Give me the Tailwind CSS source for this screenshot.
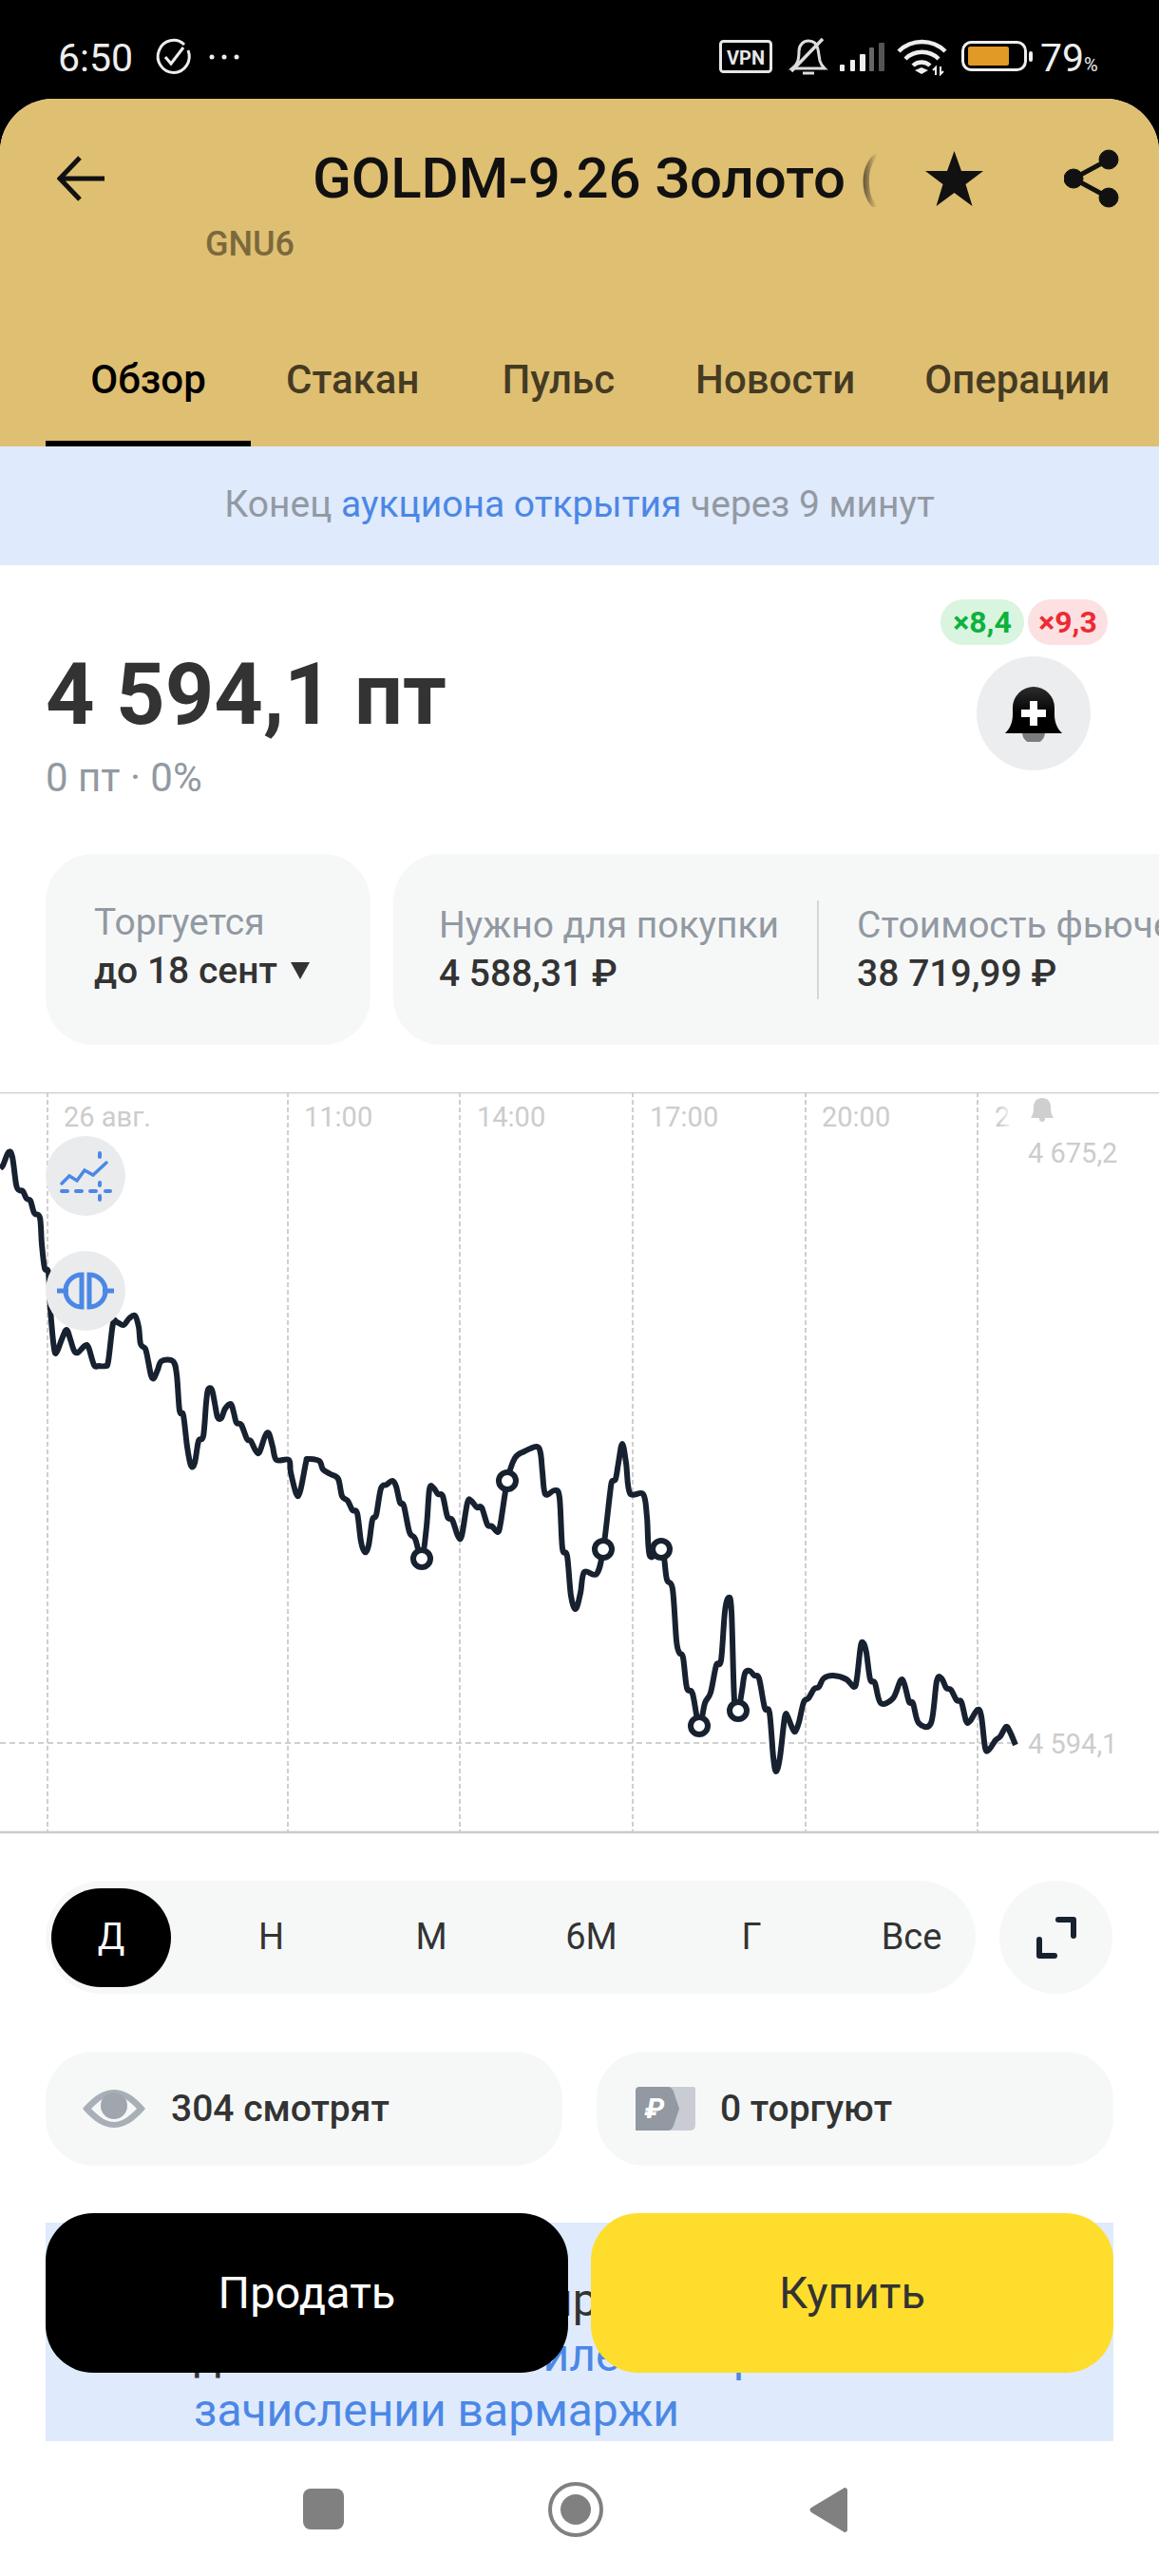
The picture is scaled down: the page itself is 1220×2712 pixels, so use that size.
<!DOCTYPE html>
<html lang="ru">
<head>
    <meta charset="UTF-8">
    <meta name="viewport" content="width=device-width, initial-scale=1.0">
    <script src="https://cdn.jsdelivr.net/npm/@tailwindcss/browser@4"></script>
    <title>GOLDM-9.26</title>
</head>
<body class="relative w-[1220px] h-[2712px] overflow-hidden bg-black font-['Roboto',sans-serif] text-[#333333]">

    <!-- status bar -->
    <div class="relative h-[104px] text-[#eeeeee]">
        <span class="absolute left-[61px] top-[37px] text-[41px] leading-[48px]">6:50</span>
        <svg class="absolute left-0 top-0" width="1220" height="104" viewBox="0 0 1220 104" fill="none">
            <!-- clock check -->
            <path d="M194 47a16.500 17 0 1 0 4 6" stroke="#eee" stroke-width="3"/>
            <path d="M174 60l6 7 13-17" stroke="#eee" stroke-width="3"/>
            <circle cx="223" cy="60" r="2.500" fill="#eee"/><circle cx="236" cy="60" r="2.500" fill="#eee"/><circle cx="249" cy="60" r="2.500" fill="#eee"/>
            <!-- vpn -->
            <rect x="758.500" y="43.500" width="53" height="32" rx="3" stroke="#e6e6e6" stroke-width="3"/>
            <text x="785" y="68" text-anchor="middle" font-size="20" font-weight="700" fill="#e6e6e6" font-family="Roboto">VPN</text>
            <!-- muted bell -->
            <path d="M834 72c5-4 7-8 7-18 0-7 5-11 10-11 5 0 9 3 10 9l2 12c1 4 3 6 5 8z" stroke="#ddd" stroke-width="3"/>
            <path d="M845 77h12" stroke="#ddd" stroke-width="3"/>
            <path d="M833 75l33-34" stroke="#ddd" stroke-width="3.500"/>
            <!-- signal -->
            <rect x="884" y="68" width="5" height="7" rx="1" fill="#eee"/>
            <rect x="895" y="63" width="5" height="12" rx="1" fill="#eee"/>
            <rect x="905" y="57" width="6" height="18" rx="1" fill="#eee"/>
            <rect x="915" y="50" width="5" height="25" rx="1" fill="#666"/>
            <rect x="925" y="45" width="6" height="30" rx="1" fill="#555"/>
            <!-- wifi -->
            <path d="M946 54a35 35 0 0 1 49 0M953 62a25 25 0 0 1 35 0M961 69a13 13 0 0 1 18 0" stroke="#eee" stroke-width="4.500"/>
            <path d="M963 74l7-3 7 3-7 4z" fill="#eee"/>
            <path d="M985 79v-8l-3 3M990 70v8l3-3" stroke="#eee" stroke-width="2"/>
            <!-- battery -->
            <rect x="1013.500" y="44.500" width="66" height="29" rx="9" stroke="#eee" stroke-width="3"/>
            <rect x="1019" y="49" width="43" height="20" rx="2" fill="#e09a25"/>
            <rect x="1083" y="54" width="4" height="11" rx="2" fill="#eee"/>
        </svg>
        <span class="absolute left-[1095px] top-[37px] text-[41px] leading-[48px]">79<span class="text-[20px]">%</span></span>
    </div>

    <div class="relative h-[2608px] bg-white rounded-t-[56px] overflow-hidden">

        <!-- gold instrument header -->
        <header class="h-[366px] bg-[#dfbf72]">
            <div class="flex items-center h-[60px] translate-y-[54px] pl-[60px]">
                <svg width="50" height="48" viewBox="0 0 50 48" fill="none" stroke="#111" stroke-width="5">
                    <path d="M50 24H4M24 2L3 24l21 22"/>
                </svg>
                <div class="ml-[219px] w-[594px] overflow-hidden whitespace-nowrap text-[60px] leading-[60px] font-medium text-[#111] [mask-image:linear-gradient(to_right,black_96%,transparent)]">GOLDM-9.26 Золото (мини)</div>
                <svg class="ml-[51px]" width="61" height="58" viewBox="0 0 61 58" fill="#111"><path d="M30.500 0l7.500 21h23L42.500 35l7 23-19-14-19 14 7-23L0 21h23z"/></svg>
                <svg class="ml-[85px]" width="58" height="62" viewBox="0 0 58 62" fill="#111" stroke="#111">
                    <circle cx="47" cy="11" r="10"/><circle cx="10" cy="31" r="10"/><circle cx="47" cy="51" r="10"/>
                    <path d="M47 11L10 31l37 20" fill="none" stroke-width="5"/>
                </svg>
            </div>
            <div class="ml-[216px] mt-[73px] text-[36px] leading-[40px] font-medium text-[#7b693c]">GNU6</div>
            <nav class="flex h-[193px] pl-[48px] text-[42px] leading-[60px] text-black/70">
                <div class="w-[216px] pt-[93px] text-center font-medium text-black border-b-[6px] border-black">Обзор</div>
                <div class="ml-[37px] pt-[93px] font-medium">Стакан</div>
                <div class="ml-[87px] pt-[93px] font-medium">Пульс</div>
                <div class="ml-[85px] pt-[93px] font-medium">Новости</div>
                <div class="ml-[73px] pt-[93px] font-medium">Операции</div>
            </nav>
        </header>

        <div class="flex items-center justify-center h-[125px] pb-[2px] bg-[#dfeafc] text-[39px] text-[#9299a2]">
            <span>Конец <span class="text-[#4b87e6]">аукциона открытия</span> через 9 минут</span>
        </div>

        <!-- price -->
        <section class="flex justify-between h-[304px] pl-[48px] pr-[54px]">
            <div class="pt-[87px]">
                <div class="text-[90px] leading-[100px] font-bold">4 594,1 пт</div>
                <div class="mt-[12px] text-[42px] leading-[50px] text-[#9299a2]">0 пт · 0%</div>
            </div>
            <div class="flex flex-col items-end pt-[36px]">
                <div class="flex text-[32px] leading-[48px] font-bold">
                    <span class="w-[88px] h-[48px] rounded-full bg-[#d9f5e0] text-center text-[#0cb23c]">×8,4</span>
                    <span class="w-[84px] h-[48px] ml-[4px] rounded-full bg-[#fde0e2] text-center text-[#ec2b33]">×9,3</span>
                </div>
                <div class="mt-[12px] mr-[18px] flex items-center justify-center w-[120px] h-[120px] rounded-full bg-[#ebedef]">
                    <svg width="60" height="60" viewBox="0 0 60 60">
                        <defs><linearGradient id="bellFill" x1="0" y1="0" x2="0" y2="1"><stop offset="0" stop-color="#2d2d2d"/><stop offset="0.6" stop-color="#000"/></linearGradient></defs>
                        <circle cx="30" cy="50" r="12" fill="#7c7c7c"/>
                        <path d="M0 51c5-5 8-11 8-20V24a22 22 0 0 1 44 0v7c0 9 3 15 8 20z" fill="url(#bellFill)"/>
                        <path d="M26 17h8v9h9v8h-9v9h-8v-9h-9v-8h9z" fill="#fff"/>
                    </svg>
                </div>
            </div>
        </section>

        <!-- contract facts -->
        <section class="flex gap-[24px] h-[201px] pl-[48px] text-[39px] leading-[50px] whitespace-nowrap">
            <div class="shrink-0 w-[342px] pt-[47px] pl-[51px] rounded-[50px] bg-[#f6f8f8]">
                <div class="text-[#9299a2]">Торгуется</div>
                <div class="mt-[1px] font-medium flex items-center">до 18 сент<svg class="ml-[14px]" width="20" height="18" viewBox="0 0 20 18" fill="#333"><path d="M0 0h20L10 18z"/></svg></div>
            </div>
            <div class="shrink-0 flex items-center w-[900px] rounded-[50px] bg-[#f6f8f8] pl-[48px]">
                <div>
                    <div class="text-[#9299a2]">Нужно для покупки</div>
                    <div class="mt-[1px] font-medium">4 588,31 ₽</div>
                </div>
                <div class="w-[2px] h-[104px] ml-[40px] bg-[#d4d6d9]"></div>
                <div class="ml-[40px]">
                    <div class="text-[#9299a2]">Стоимость фьючерса</div>
                    <div class="mt-[1px] font-medium">38 719,99 ₽</div>
                </div>
            </div>
        </section>

        <!-- price chart -->
        <svg class="block mt-[50px]" width="1220" height="781" viewBox="0 1150 1220 781" fill="none" font-family="Roboto">
            <path d="M0 1150H1220M0 1929H1220" stroke="#cbcbcb" stroke-width="2.500"/>
            <path d="M50 1150V1929M303 1150V1929M484 1150V1929M666 1150V1929M848 1150V1929M1029 1150V1929" stroke="#cfcfcf" stroke-width="2" stroke-dasharray="5 3"/>
            <path d="M0 1835H1068" stroke="#cfcfcf" stroke-width="2" stroke-dasharray="6 4"/>
            <g font-size="29" fill="#cccccc">
                <text x="67" y="1186">26 авг.</text>
                <text x="320" y="1186">11:00</text>
                <text x="502" y="1186">14:00</text>
                <text x="684" y="1186">17:00</text>
                <text x="865" y="1186">20:00</text>
                <text x="1047" y="1186" fill="url(#labelFade)">2</text>
                <text x="1082" y="1224">4 675,2</text>
                <text x="1082" y="1846">4 594,1</text>
            </g>
            <defs><linearGradient id="labelFade" x1="0" y1="0" x2="1" y2="0"><stop offset="0.3" stop-color="#ccc"/><stop offset="1" stop-color="#ccc" stop-opacity="0.2"/></linearGradient></defs>
            <path d="M1097 1156c-6 0-9 4-9 10 0 5-1 8-3 11h24c-2-3-3-6-3-11 0-6-3-10-9-10z" fill="#cfcfcf"/>
            <circle cx="1097" cy="1178" r="3" fill="#cfcfcf"/>

            <path id="price-line" stroke="#17212f" stroke-width="6" stroke-linejoin="round"></path>

            <!-- trade markers -->
            <g fill="#fff" stroke="#17212f" stroke-width="6">
                <circle cx="444" cy="1641" r="9"/><circle cx="534" cy="1559" r="9"/><circle cx="635" cy="1631" r="9"/>
                <circle cx="696" cy="1631" r="9"/><circle cx="736" cy="1817" r="9"/><circle cx="777" cy="1801" r="9"/>
            </g>

            <!-- chart tools -->
            <circle cx="90" cy="1238" r="42" fill="#e9ebed"/>
            <polyline points="65,1246 73,1238 81,1243 89,1232 98,1237 112,1224" stroke="#4b87e6" stroke-width="3.500" stroke-linecap="round"/>
            <path d="M105 1214v4M105 1245v3M105 1259v4M65 1254h6M80 1254h6M95 1254h6M111 1254h5" stroke="#4b87e6" stroke-width="4" stroke-linecap="round"/>
            <circle cx="90" cy="1359" r="42" fill="#e9ebed"/>
            <path d="M60 1359h12M108 1359h12" stroke="#4b87e6" stroke-width="5"/>
            <path d="M86 1342a17 17 0 0 0 0 34zM94 1342a17 17 0 0 1 0 34z" stroke="#4b87e6" stroke-width="5"/>
        </svg>

        <!-- period selector -->
        <div class="flex gap-[25px] mt-[49px] px-[48px]">
            <div class="flex items-center w-[979px] h-[119px] pl-[6px] gap-[42.500px] rounded-full bg-[#f6f8f8] text-[38px]">
                <span class="flex items-center justify-center w-[126px] h-[104px] rounded-full bg-black text-white">Д</span>
                <span class="w-[126px] text-center">Н</span>
                <span class="w-[126px] text-center">М</span>
                <span class="w-[126px] text-center">6М</span>
                <span class="w-[126px] text-center">Г</span>
                <span class="w-[126px] text-center">Все</span>
            </div>
            <div class="flex items-center justify-center w-[119px] h-[119px] rounded-full bg-[#f6f8f8]">
                <svg width="44" height="46" viewBox="0 0 44 46" fill="none" stroke="#17212f" stroke-width="6" stroke-linecap="round" stroke-linejoin="round">
                    <path d="M24 4h16v17M4 25v17h16"/>
                </svg>
            </div>
        </div>

        <!-- audience -->
        <div class="flex gap-[36px] mt-[61px] px-[48px] text-[39px] font-medium">
            <div class="flex items-center w-[544px] h-[120px] pl-[39px] rounded-[50px] bg-[#f6f8f8]">
                <svg width="66" height="40" viewBox="0 0 66 40">
                    <path d="M0 20C12 6 22 0 33 0s21 6 33 20C54 34 44 40 33 40S12 34 0 20z" fill="#a9afb6"/>
                    <path d="M9 20c9-9 16-14 24-14s15 5 24 14c-9 9-16 14-24 14S18 29 9 20z" fill="#f6f8f8"/>
                    <circle cx="33" cy="17" r="14" fill="#a0a6ad"/>
                </svg>
                <span class="ml-[27px]">304 смотрят</span>
            </div>
            <div class="flex items-center w-[544px] h-[120px] pl-[41px] rounded-[50px] bg-[#f6f8f8]">
                <svg width="63" height="46" viewBox="0 0 63 46" font-family="Roboto">
                    <path d="M20 0h41a2 2 0 0 1 2 2v38q0 6-6 6H20z" fill="#c9cdd3"/>
                    <path d="M0 4q0-4 4-4h30q4 0 6 5l6 18-6 18q-2 5-6 5H0z" fill="#9299a2"/>
                    <text x="20" y="33" text-anchor="middle" font-size="30" font-weight="700" font-style="italic" fill="#fff">₽</text>
                </svg>
                <span class="ml-[26px]">0 торгуют</span>
            </div>
        </div>

        <!-- risk note under the order buttons -->
        <div class="h-[230px] mt-[60px] mx-[48px] pt-[53px] pl-[156px] bg-[#dfeafc] text-[48px] leading-[58px] whitespace-nowrap overflow-hidden">
            <div>Правила торгов при</div>
            <div>доставке тех <span class="text-[#4b87e6]">в силе набора</span></div>
            <div class="text-[#4b87e6]">зачислении вармаржи</div>
        </div>

        <!-- system navigation -->
        <div class="flex items-center justify-center h-[143px]">
            <svg width="1220" height="143" viewBox="0 2569 1220 143">
                <rect x="319" y="2619" width="43" height="43" rx="8" fill="#808080"/>
                <circle cx="606" cy="2641" r="27" fill="none" stroke="#808080" stroke-width="4"/>
                <circle cx="606" cy="2641" r="16" fill="#808080"/>
                <path d="M889 2618a3 3 0 0 1 3 2v43a3 3 0 0 1-3 2l-35-21q-3-3 0-5z" fill="#808080"/>
            </svg>
        </div>
    </div>

    <!-- order buttons float over the page -->
    <div class="absolute left-[48px] top-[2330px] flex gap-[24px] text-[47px]">
        <button class="w-[550px] h-[168px] rounded-[50px] bg-black text-white">Продать</button>
        <button class="w-[550px] h-[168px] rounded-[50px] bg-[#ffdd2d] text-[#333]">Купить</button>
    </div>

<script>
    // price series in chart coordinates
    const prices = [[0,1230],[3,1227],[9,1213],[13,1218],[17,1247],[20,1253],[24,1254],[28,1262],[32,1264],[36,1277],[42,1282],[44,1310],[47,1335],[51,1340],[53,1378],[57,1420],[60,1423],[65,1410],[70,1400],[74,1410],[78,1422],[82,1424],[89,1417],[93,1418],[99,1437],[104,1438],[111,1438],[114,1433],[119,1393],[123,1392],[130,1395],[136,1388],[142,1385],[146,1397],[148,1415],[153,1420],[156,1433],[159,1448],[162,1451],[166,1442],[170,1433],[182,1433],[186,1447],[189,1485],[193,1490],[197,1523],[201,1543],[205,1540],[209,1517],[214,1512],[217,1477],[219,1463],[223,1463],[226,1477],[229,1492],[233,1493],[237,1483],[243,1478],[246,1487],[249,1498],[254,1500],[260,1515],[264,1517],[269,1527],[273,1529],[279,1512],[283,1509],[287,1523],[291,1537],[304,1537],[306,1550],[312,1573],[316,1570],[322,1540],[324,1536],[336,1538],[340,1547],[348,1552],[356,1557],[360,1575],[366,1580],[371,1590],[376,1593],[380,1623],[384,1634],[388,1627],[392,1600],[396,1595],[401,1567],[407,1563],[413,1559],[417,1565],[421,1582],[425,1585],[431,1613],[437,1620],[444,1641],[449,1607],[452,1568],[456,1566],[461,1573],[466,1575],[471,1597],[476,1600],[482,1617],[486,1617],[492,1582],[496,1580],[502,1587],[507,1587],[513,1605],[518,1607],[524,1613],[527,1603],[534,1559],[542,1535],[552,1528],[565,1523],[569,1530],[571,1550],[574,1573],[584,1569],[589,1577],[592,1630],[597,1638],[601,1680],[606,1694],[611,1677],[615,1655],[628,1657],[635,1631],[642,1573],[644,1560],[648,1557],[651,1540],[655,1520],[659,1540],[663,1572],[677,1573],[681,1597],[684,1638],[696,1631],[699,1640],[702,1663],[708,1673],[712,1727],[715,1740],[719,1745],[723,1777],[729,1783],[736,1817],[742,1793],[748,1782],[754,1753],[759,1748],[763,1697],[767,1682],[770,1697],[773,1790],[777,1801],[781,1780],[784,1762],[789,1759],[794,1764],[799,1767],[805,1798],[810,1803],[814,1850],[817,1865],[821,1850],[826,1808],[829,1807],[833,1817],[837,1823],[841,1813],[846,1792],[851,1788],[857,1778],[862,1776],[867,1767],[877,1764],[891,1768],[899,1776],[902,1767],[906,1733],[909,1730],[912,1740],[916,1768],[921,1772],[927,1793],[940,1788],[948,1769],[952,1773],[957,1792],[961,1793],[967,1814],[980,1814],[986,1770],[991,1767],[996,1777],[1001,1779],[1007,1790],[1012,1792],[1017,1812],[1021,1812],[1029,1800],[1033,1807],[1037,1840],[1041,1842],[1048,1832],[1053,1828],[1059,1818],[1063,1823],[1069,1837]];

    // catmull-rom through the points so the line stays rounded
    let d = `M${prices[0]}`;
    for (let i = 0; i < prices.length - 1; i++) {
        const p0 = prices[Math.max(i - 1, 0)];
        const p1 = prices[i];
        const p2 = prices[i + 1];
        const p3 = prices[Math.min(i + 2, prices.length - 1)];
        const c1 = [p1[0] + (p2[0] - p0[0]) / 6, p1[1] + (p2[1] - p0[1]) / 6];
        const c2 = [p2[0] - (p3[0] - p1[0]) / 6, p2[1] - (p3[1] - p1[1]) / 6];
        d += `C${c1} ${c2} ${p2}`;
    }
    document.querySelector("#price-line").setAttribute("d", d);
</script>
</body>
</html>
